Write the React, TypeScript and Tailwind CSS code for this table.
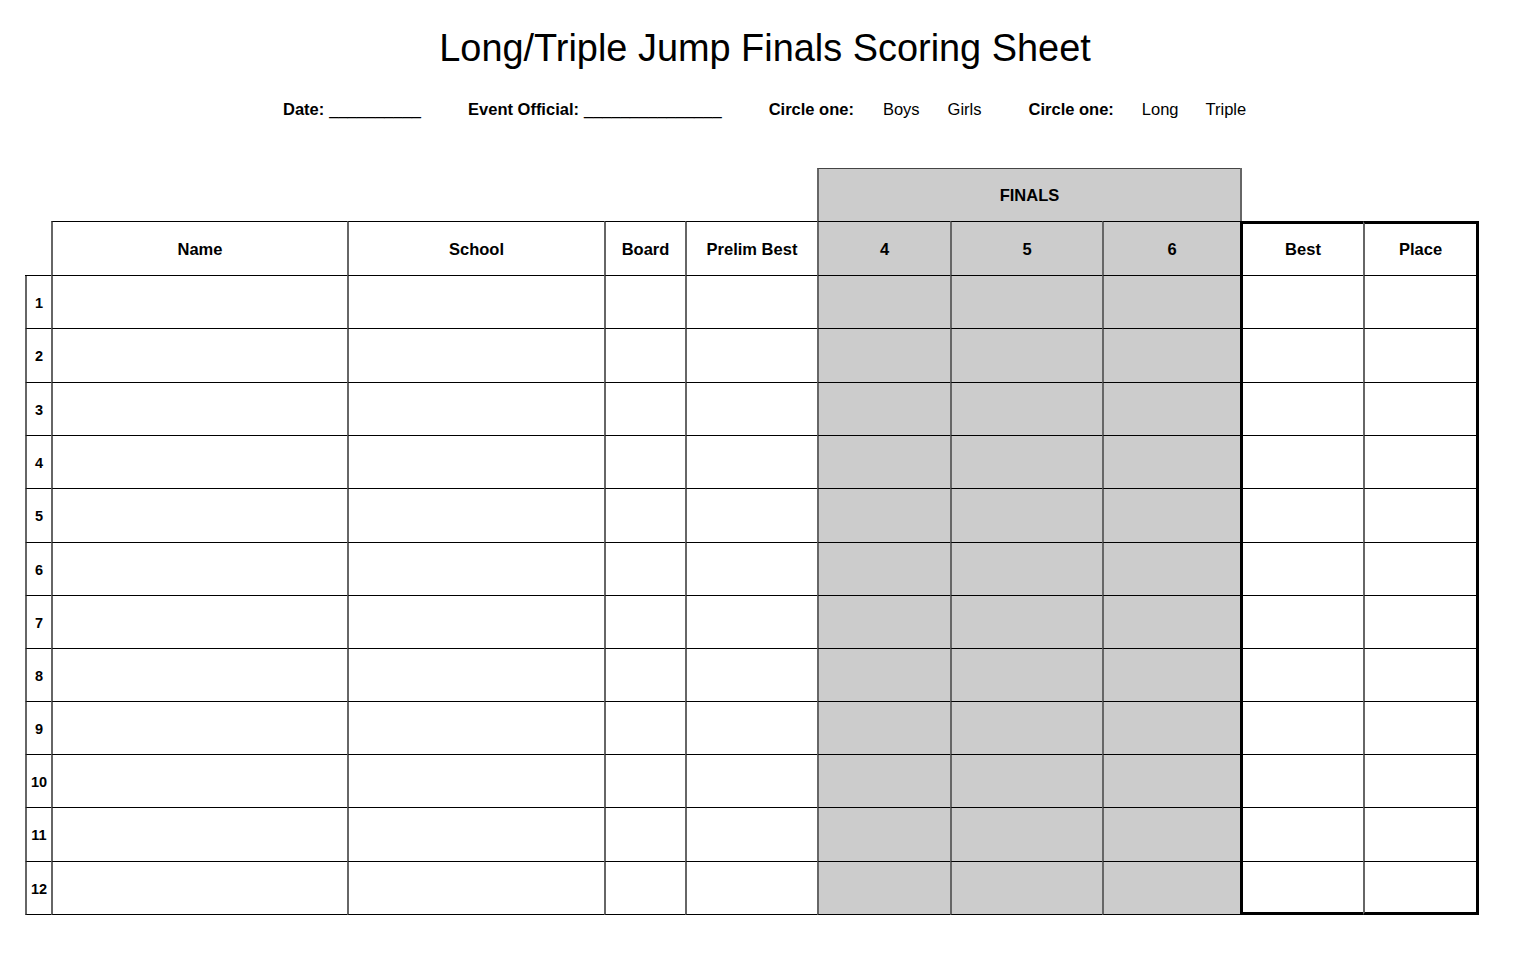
import React from "react";

const GRAY = "bg-[#cccccc]";
const rowClasses = [
  "h-[53px]",
  "h-[54px]",
  "h-[53px]",
  "h-[53px]",
  "h-[54px]",
  "h-[53px]",
  "h-[53px]",
  "h-[53px]",
  "h-[53px]",
  "h-[53px]",
  "h-[54px]",
  "h-[53px]",
];

const headers = ["Name", "School", "Board", "Prelim Best", "4", "5", "6"];

export default function App() {
  return (
    <div className="w-[1515px] h-[964px] bg-white text-black font-['Liberation_Sans',Arial,sans-serif]">
      <div className="pt-[28px] text-center text-[37.9px] leading-[40px] pl-[15px]">
        Long/Triple Jump Finals Scoring Sheet
      </div>
      <div className="mt-[31px] flex items-center pl-[283px] text-[16.5px] leading-[20px]">
        <span className="font-bold">Date:</span>
        <span className="ml-[5px]">__________</span>
        <span className="ml-[47px] font-bold">Event Official:</span>
        <span className="ml-[5px]">_______________</span>
        <span className="ml-[47px] font-bold">Circle one:</span>
        <span className="ml-[29px]">Boys</span>
        <span className="ml-[28px]">Girls</span>
        <span className="ml-[47px] font-bold">Circle one:</span>
        <span className="ml-[28px]">Long</span>
        <span className="ml-[27px]">Triple</span>
      </div>

      <div className="mt-[49px] ml-[25px] grid w-[1454px] grid-cols-[26px_296px_257px_81px_132px_133px_152px_138px_123px_116px] text-[16.5px] font-bold">
        {/* Row 0 */}
        <div className="col-span-5 h-[53px]" />
        <div className={`col-span-3 h-[53px] ${GRAY} border-t border-t-[#444] border-l-2 border-l-[#666] flex items-center justify-center`}>
          FINALS
        </div>
        <div className="col-span-2 h-[53px] border-l-2 border-l-[#666]" />

        {/* Header row */}
        <div className="h-[55px] border-b border-b-black" />
        {headers.map((h, i) => (
          <div
            key={h}
            className={`h-[55px] pt-[2px] border-l-2 border-l-[#666] border-t border-t-black border-b border-b-black flex items-center justify-center ${i >= 4 ? GRAY : ""}`}
          >
            {h}
          </div>
        ))}
        <div className="h-[55px] border-l-[3px] border-l-black border-t-[3px] border-t-black border-b border-b-black flex items-center justify-center">
          Best
        </div>
        <div className="h-[55px] border-l-2 border-l-[#666] border-t-[3px] border-t-black border-r-[3px] border-r-black border-b border-b-black flex items-center justify-center">
          Place
        </div>

        {/* Data rows */}
        {rowClasses.map((hc, r) => {
          const last = r === rowClasses.length - 1;
          return (
            <React.Fragment key={r}>
              <div className={`${hc} pt-[3px] border-l-2 border-l-[#666] border-b border-b-black flex items-center justify-center text-[14.5px]`}>
                {r + 1}
              </div>
              {headers.map((h, i) => (
                <div
                  key={h}
                  className={`${hc} border-l-2 border-l-[#666] border-b border-b-black ${i >= 4 ? GRAY : ""}`}
                />
              ))}
              <div
                className={`${hc} border-l-[3px] border-l-black ${last ? "border-b-[3px]" : "border-b"} border-b-black`}
              />
              <div
                className={`${hc} border-l-2 border-l-[#666] border-r-[3px] border-r-black ${last ? "border-b-[3px]" : "border-b"} border-b-black`}
              />
            </React.Fragment>
          );
        })}
      </div>
    </div>
  );
}
